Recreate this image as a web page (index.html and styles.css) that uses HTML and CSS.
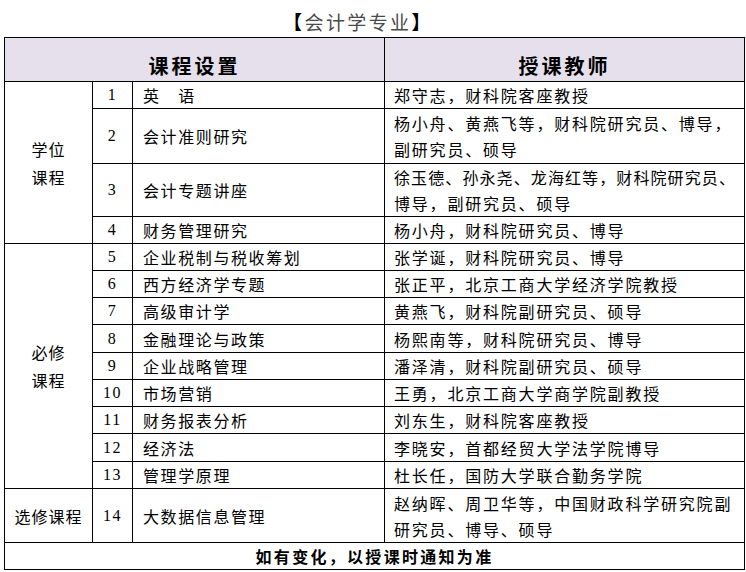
FILE: index.html
```html
<!DOCTYPE html>
<html lang="zh-CN">
<head>
<meta charset="utf-8">
<title>会计学专业</title>
<link rel="stylesheet" href="styles.css">
</head>
<body>
<div class="title"><span class="br">【</span>会计学专业<span class="br">】</span></div>
<table class="course">
  <colgroup>
    <col class="c-cat">
    <col class="c-no">
    <col class="c-name">
    <col class="c-teacher">
  </colgroup>
  <thead>
    <tr class="head">
      <th colspan="3">课程设置</th>
      <th>授课教师</th>
    </tr>
  </thead>
  <tbody>
    <tr class="r26">
      <td class="cat" rowspan="4">学位<br>课程</td>
      <td class="no">1</td>
      <td class="name">英　语</td>
      <td class="teacher">郑守志，财科院客座教授</td>
    </tr>
    <tr class="r55">
      <td class="no">2</td>
      <td class="name">会计准则研究</td>
      <td class="teacher">杨小舟、黄燕飞等，财科院研究员、博导，<br>副研究员、硕导</td>
    </tr>
    <tr class="r53">
      <td class="no">3</td>
      <td class="name">会计专题讲座</td>
      <td class="teacher"><span class="tight">徐玉德、孙永尧、龙海红等，财科院研究员、</span><br>博导，副研究员、硕导</td>
    </tr>
    <tr class="r27">
      <td class="no">4</td>
      <td class="name">财务管理研究</td>
      <td class="teacher">杨小舟，财科院研究员、博导</td>
    </tr>
    <tr class="r27">
      <td class="cat" rowspan="9">必修<br>课程</td>
      <td class="no">5</td>
      <td class="name">企业税制与税收筹划</td>
      <td class="teacher">张学诞，财科院研究员、博导</td>
    </tr>
    <tr class="r27">
      <td class="no">6</td>
      <td class="name">西方经济学专题</td>
      <td class="teacher">张正平，北京工商大学经济学院教授</td>
    </tr>
    <tr class="r27">
      <td class="no">7</td>
      <td class="name">高级审计学</td>
      <td class="teacher">黄燕飞，财科院副研究员、硕导</td>
    </tr>
    <tr class="r28">
      <td class="no">8</td>
      <td class="name">金融理论与政策</td>
      <td class="teacher">杨熙南等，财科院研究员、博导</td>
    </tr>
    <tr class="r27">
      <td class="no">9</td>
      <td class="name">企业战略管理</td>
      <td class="teacher">潘泽清，财科院副研究员、硕导</td>
    </tr>
    <tr class="r27">
      <td class="no">10</td>
      <td class="name">市场营销</td>
      <td class="teacher">王勇，北京工商大学商学院副教授</td>
    </tr>
    <tr class="r27">
      <td class="no">11</td>
      <td class="name">财务报表分析</td>
      <td class="teacher">刘东生，财科院客座教授</td>
    </tr>
    <tr class="r28">
      <td class="no">12</td>
      <td class="name">经济法</td>
      <td class="teacher">李晓安，首都经贸大学法学院博导</td>
    </tr>
    <tr class="r27">
      <td class="no">13</td>
      <td class="name">管理学原理</td>
      <td class="teacher">杜长任，国防大学联合勤务学院</td>
    </tr>
    <tr class="r54">
      <td class="cat">选修课程</td>
      <td class="no">14</td>
      <td class="name">大数据信息管理</td>
      <td class="teacher">赵纳晖、周卫华等，中国财政科学研究院副<br>研究员、博导、硕导</td>
    </tr>
    <tr class="foot">
      <td colspan="4">如有变化，以授课时通知为准</td>
    </tr>
  </tbody>
</table>
</body>
</html>
```

FILE: styles.css
```css
html, body {
  margin: 0;
  padding: 0;
  background: #ffffff;
}

body {
  width: 746px;
  height: 572px;
  overflow: hidden;
  font-family: "Noto Sans CJK SC", "Liberation Serif", sans-serif;
  color: #000;
}

.title {
  height: 37px;
  box-sizing: border-box;
  padding-top: 7px;
  padding-right: 30px;
  line-height: 30px;
  font-size: 19px;
  text-align: center;
  color: #4a4a4a;
  letter-spacing: 2.4px;
}

.title .br {
  color: #000;
  font-weight: 700;
}

.course {
  margin-left: 4px;
  width: 740px;
  border-collapse: collapse;
  table-layout: fixed;
  border: 1px solid #000;
}

.c-cat { width: 88px; }
.c-no { width: 40px; }
.c-name { width: 252px; }
.c-teacher { width: 360px; }

.course th,
.course td {
  border: 1px solid #000;
  padding: 0;
  font-size: 16px;
  font-weight: 400;
  white-space: nowrap;
  overflow: hidden;
}

.head {
  height: 44px;
  background: #e5e0ec;
}

.head th {
  font-size: 20px;
  font-weight: 700;
  letter-spacing: 3px;
  line-height: 24px;
  vertical-align: bottom;
  padding-bottom: 3px;
  text-align: center;
}

.r26 { height: 26px; }
.r27 { height: 27px; }
.r28 { height: 28px; }
.r53 { height: 53px; }
.r54 { height: 54px; }
.r55 { height: 55px; }

.cat {
  text-align: center;
  vertical-align: middle;
  line-height: 28px;
  letter-spacing: 1px;
  padding-left: 1px;
}

.no {
  text-align: center;
  font-family: "Liberation Serif", serif;
  letter-spacing: 1.5px;
  padding-left: 1px;
}

.name {
  padding-left: 10px !important;
  letter-spacing: 1.6px;
  line-height: 24px;
}

.teacher {
  padding-left: 9px !important;
  letter-spacing: 1.8px;
  line-height: 26px;
}

.teacher .tight {
  letter-spacing: 1.1px;
}

.foot {
  height: 27px;
}

.foot td {
  text-align: center;
  font-weight: 700;
  letter-spacing: 2.3px;
  line-height: 24px;
}
```
